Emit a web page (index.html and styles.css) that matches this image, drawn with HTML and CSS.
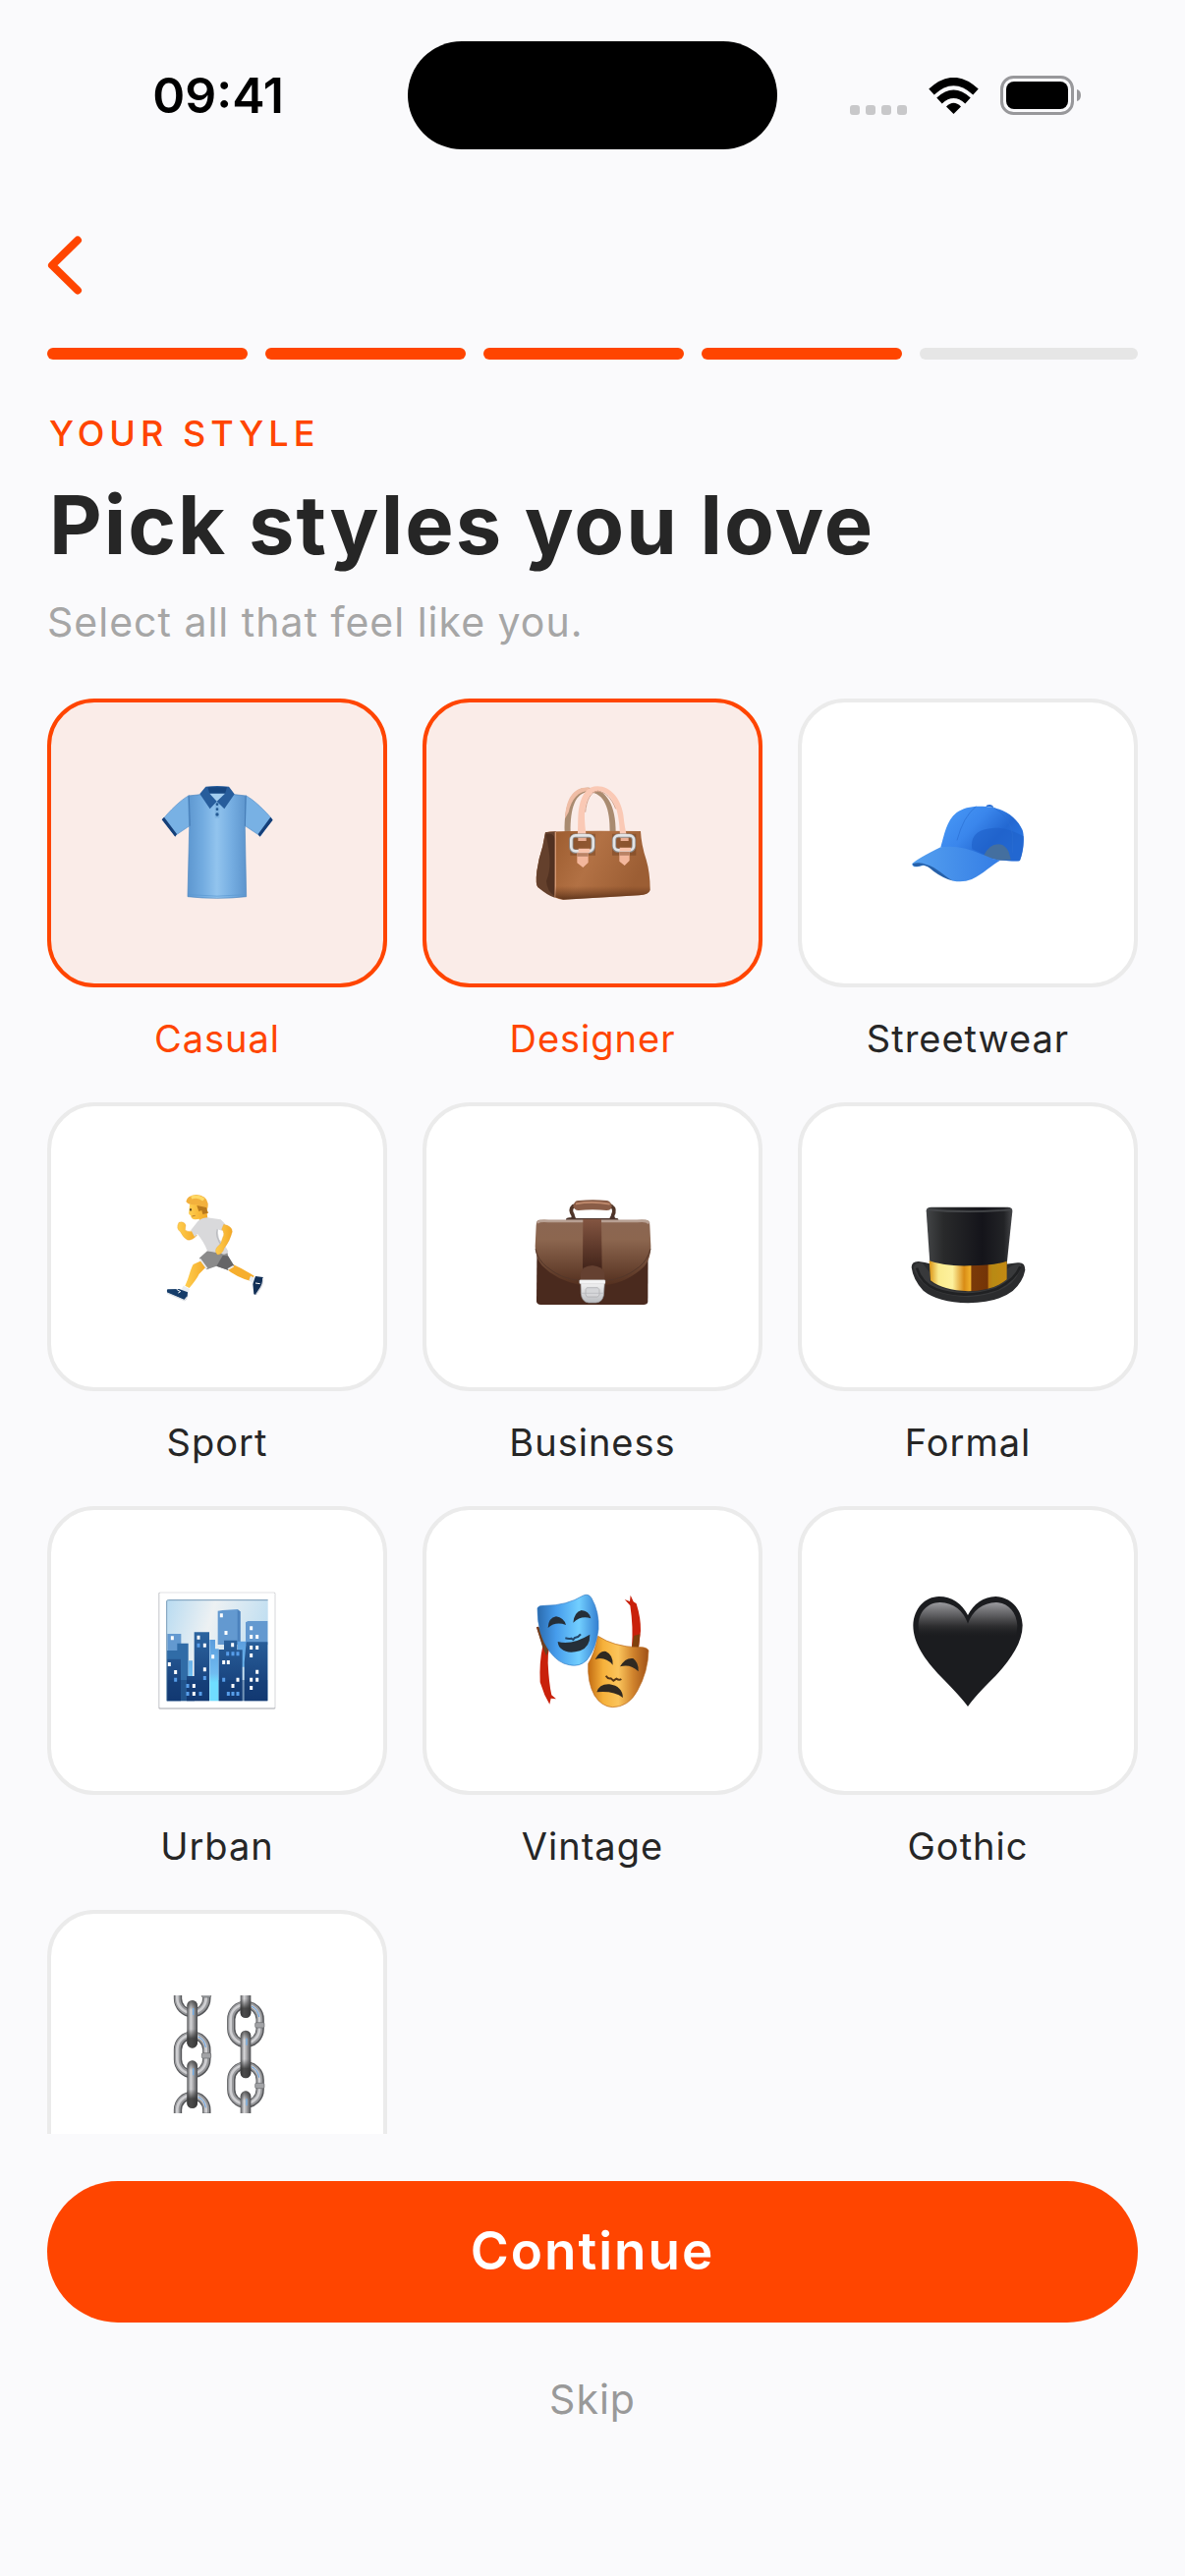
FILE: index.html
```html
<!DOCTYPE html>
<html lang="en">
<head>
<meta charset="utf-8">
<meta name="viewport" content="width=device-width, initial-scale=1">
<title>Pick styles you love</title>
<link rel="stylesheet" href="styles.css">
</head>
<body>
<div class="screen">
  <header class="status">
    <time class="clock">09:41</time>
    <div class="island"></div>
    <div class="indicators">
      <svg class="signal" viewBox="0 0 58 10" width="58" height="10" aria-hidden="true"><g fill="#c8c8ca"><rect width="10" height="10" rx="3"/><rect x="16" width="10" height="10" rx="3"/><rect x="32" width="10" height="10" rx="3"/><rect x="48" width="10" height="10" rx="3"/></g></svg>
      <svg viewBox="0 0 51 37" width="51" height="37" aria-hidden="true"><g fill="none" stroke="#000" stroke-width="8"><path d="M3 14.500Q25.500 -6.500 48 14.500"/><path d="M11 23.500Q25.500 10 40 23.500"/></g><path d="M25.500 37L18 29.500Q25.500 22 33 29.500Z"/></svg>
      <svg viewBox="0 0 82 40" width="82" height="40" aria-hidden="true"><rect x="1.500" y="1.500" width="72" height="37" rx="12" fill="none" stroke="#98989b" stroke-width="3"/><rect x="6" y="6" width="63" height="28" rx="8"/><path d="M78 14Q82 15 82 20T78 26Z" fill="#98989b"/></svg>
    </div>
  </header>

  <nav class="nav">
    <button class="back" type="button" aria-label="Back">
      <svg viewBox="0 0 36 60" width="36" height="60" aria-hidden="true"><path d="M31 4.500L5 30L31 55.500" fill="none" stroke="#ff4500" stroke-width="8" stroke-linecap="round" stroke-linejoin="round"/></svg>
    </button>
    <div class="progress" role="progressbar" aria-label="Step" aria-valuemin="0" aria-valuemax="5" aria-valuenow="4">
      <span class="step step-done"></span><span class="step step-done"></span><span class="step step-done"></span><span class="step step-done"></span><span class="step"></span>
    </div>
  </nav>

  <section class="intro">
    <p class="eyebrow">YOUR STYLE</p>
    <h1 class="title">Pick styles you love</h1>
    <p class="subtitle">Select all that feel like you.</p>
  </section>

  <main class="styles">
    <label class="tile">
      <input class="tile-box" type="checkbox" checked>
      <svg class="tile-icon" viewBox="63 84 360 360" aria-hidden="true">
        <defs>
          <linearGradient id="shirt" x1="0" x2="1"><stop stop-color="#5d97d0"/><stop offset=".25" stop-color="#72abe0"/><stop offset=".5" stop-color="#92c4ee"/><stop offset=".75" stop-color="#75ade1"/><stop offset="1" stop-color="#5d95cd"/></linearGradient>
        </defs>
        <path d="M157 119C132 132 96 168 77 192L114 242L160 211L190 150ZM330 119C355 132 392 168 411 192L375 243L327 211L300 150Z" fill="#78b1e4" stroke="#5b93cb" stroke-width="2"/>
        <path d="M81 185L120 237L115 245L74 193ZM406 185L368 237L373 245L413 194Z" fill="#153f78"/>
        <path d="M155 120Q185 117 203 115L285 115Q305 117 331 120L328 220L332 428Q243 438 153 428L158 220Z" fill="url(#shirt)" stroke="#4d86bf" stroke-width="2"/>
        <path d="M157 122L160 212M330 122L328 212" stroke="#477eb8" stroke-width="3"/>
        <path d="M220 113H267L243 139Z" fill="#a3cdef"/>
        <path d="M236 134H250V188H236Z" fill="#7fb4e2"/>
        <path d="M208 92Q243 88 279 92L296 115L265 160L242 137L221 160L190 114Z" fill="#275d9c"/>
        <path d="M214 94H273L267 113H220Z" fill="#164680"/>
        <path d="M220 113L242 137L267 113" fill="#a3cdef"/>
        <g fill="#235992"><circle cx="243" cy="146" r="4"/><circle cx="243" cy="161" r="4"/><circle cx="243" cy="177" r="5"/></g>
        <path d="M157 422Q243 431 329 422" fill="none" stroke="#5b98d2" stroke-width="2"/>
      </svg>
      <span class="tile-label">Casual</span>
    </label>
    <label class="tile">
      <input class="tile-box" type="checkbox" checked>
      <svg class="tile-icon" viewBox="69 84 360 360" aria-hidden="true">
        <defs>
          <linearGradient id="bag" x1="0" x2="1" y1="0" y2=".3"><stop stop-color="#955528"/><stop offset=".55" stop-color="#b27144"/><stop offset="1" stop-color="#9c5e34"/></linearGradient>
          <linearGradient id="bagShade" x1="0" x2="0" y1="0" y2="1"><stop offset=".8" stop-color="#5c3018" stop-opacity="0"/><stop offset="1" stop-color="#44220f" stop-opacity=".75"/></linearGradient>
        </defs>
        <path d="M164 232C162 145 184 92 238 95C292 98 321 150 320 232H302C303 160 286 112 238 108C196 110 181 158 182 232Z" fill="#a98b70"/>
        <path d="M165 190C168 130 190 92 238 95L242 104C205 104 184 132 176 170Z" fill="#efbda5"/>
        <path d="M105 232Q115 226 396 228Q398 270 413 315Q425 355 425 408Q421 422 391 424L160 437Q140 438 82 399Q74 390 79 350Q85 310 97 274Z" fill="url(#bag)"/>
        <path d="M105 232L137 229L134 431Q115 427 82 399Q75 390 79 350Q85 310 97 274Z" fill="#64402c"/>
        <path d="M106 238Q137 230 134 262L132 425Q110 410 108 380Q130 330 106 238Z" fill="#472a1b" opacity=".65"/>
        <path d="M136 230V430" stroke="#d49873" stroke-width="4"/>
        <path d="M136 229H396Q398 270 413 315Q425 355 425 408Q421 422 391 424L160 437L135 430Z" fill="url(#bagShade)"/>
        <path d="M181 236H258V302H181ZM309 236H382V302H309Z" fill="#6d3d1f" opacity=".45"/>
        <path d="M203 248C206 215 203 180 208 155C217 112 235 91 264 91C305 91 336 130 343 178C346 205 349 228 356 248H333C333 220 329 180 321 158C309 124 290 104 265 104C241 106 228 135 225 170C224 200 228 228 231 248Z" fill="#fac9b5"/>
        <path d="M227 170C230 135 243 107 265 106C289 107 308 128 320 160" fill="none" stroke="#d8a48d" stroke-width="3"/>
        <path d="M205 247H230V258H205ZM335 247H359V258H335Z" fill="#eaae93"/>
        <g fill="none"><rect x="184" y="242" width="67" height="48" rx="13" stroke="#8d8b8b" stroke-width="13"/><rect x="315" y="242" width="60" height="45" rx="13" stroke="#8d8b8b" stroke-width="13"/><rect x="184" y="241" width="67" height="48" rx="13" stroke="#e3e4e5" stroke-width="8"/><rect x="315" y="241" width="60" height="45" rx="13" stroke="#e3e4e5" stroke-width="8"/></g>
        <path d="M202 293H236V324L220 339L202 325ZM331 290H362V318L347 333L331 320Z" fill="#f3b79c"/>
        <path d="M202 295H236V305H202ZM331 291H362V302H331Z" fill="#b98365"/>
        <path d="M206 281H241V293H206ZM332 278H366V289H332Z" fill="#fac4ac"/>
      </svg>
      <span class="tile-label">Designer</span>
    </label>
    <label class="tile">
      <input class="tile-box" type="checkbox">
      <svg class="tile-icon" viewBox="75 54 360 360" aria-hidden="true">
        <defs>
          <linearGradient id="crown" x1="0" x2="1" y1="0" y2=".6"><stop stop-color="#4a9bf8"/><stop offset=".45" stop-color="#3a86ec"/><stop offset=".75" stop-color="#2368d2"/><stop offset="1" stop-color="#2a74df"/></linearGradient>
          <linearGradient id="brim" x1="0" x2="1"><stop stop-color="#55a0ef"/><stop offset="1" stop-color="#347de5"/></linearGradient>
        </defs>
        <path d="M310 122Q312 116 323 117Q333 119 333 126Z" fill="#2b70d4"/>
        <path d="M172 247C183 210 190 165 220 142C247 121 287 118 333 126C376 135 408 163 422 195C430 220 423 266 414 287Q410 293 350 286L260 275Z" fill="url(#crown)"/>
        <path d="M268 253Q260 200 315 191Q365 179 425 214Q427 255 414 288Q385 290 350 286Z" fill="#1f61ca" opacity=".65"/>
        <path d="M303 274Q318 239 348 238Q379 239 386 286L350 287Z" fill="#446f9f"/>
        <path d="M280 123Q241 153 222 226M335 126Q386 158 391 207V264" fill="none" stroke="#2b6ed1" stroke-width="2"/>
        <path d="M172 247Q230 238 302 270Q327 283 354 287C327 302 303 327 267 345Q240 356 211 350C180 338 150 306 119 302Q112 306 91 307Q84 305 85 297Q105 280 172 247Z" fill="url(#brim)"/>
        <path d="M86 298Q108 291 128 300C160 308 182 336 211 350Q181 343 150 320Q124 297 112 303Q90 311 86 298Z" fill="#2660a9"/>
      </svg>
      <span class="tile-label">Streetwear</span>
    </label>
    <label class="tile">
      <input class="tile-box" type="checkbox">
      <svg class="tile-icon" viewBox="33 57 360 360" aria-hidden="true">
        <defs><linearGradient id="skin" x1="0" x2="1"><stop stop-color="#ffce50"/><stop offset="1" stop-color="#f3a825"/></linearGradient></defs>
        <path d="M236 301Q272 331 316 342L326 326Q288 302 254 287Z" fill="#f6ae2d"/>
        <path d="M166 279L140 291C131 306 126 334 115 356L128 363Q151 335 158 320L183 295Z" fill="url(#skin)"/>
        <path d="M158 272L183 250H231Q246 249 246 265Q252 276 264 294L246 308L211 296L181 307Z" fill="#8b8b8b"/>
        <path d="M230 264L246 265L264 294L246 308L211 296Z" fill="#656567"/>
        <path d="M160 274L182 304M263 296L246 306" stroke="#eee" stroke-width="5"/>
        <path d="M110 356L129 366L124 381L103 369ZM315 326L331 334L325 350L310 340Z" fill="#e8edf2"/>
        <path d="M61 367L97 366L123 376Q123 398 113 401Q100 394 62 379Q57 373 61 367Z" fill="#153c69"/>
        <path d="M62 379L113 401L122 390" fill="none" stroke="#e1e3e6" stroke-width="4"/>
        <path d="M330 327L353 330Q355 352 340 371Q333 387 325 382L322 351Z" fill="#112f56"/>
        <path d="M353 333Q355 352 340 371L332 383" fill="none" stroke="#d9dce2" stroke-width="4"/>
        <path d="M89 367L101 374L94 378M330 348L344 350" fill="none" stroke="#fff" stroke-width="3"/>
        <path d="M96 163Q111 158 117 171L115 186Q126 194 137 188L151 202Q138 219 122 216Q111 211 101 192Q86 181 96 163Z" fill="url(#skin)" stroke="#e79e29" stroke-width="1"/>
        <path d="M129 107L127 129Q124 138 132 141Q134 154 146 154L158 152L160 161L184 151L180 119L160 98Z" fill="url(#skin)"/>
        <path d="M133 186L155 158Q176 145 192 149L224 154L238 168L228 188L214 184L219 214Q239 233 247 252Q239 264 226 258L183 250Q175 226 153 198L144 207Z" fill="#d9d9db"/>
        <path d="M214 184Q205 205 230 239" stroke="#bbbdc1" stroke-width="4" fill="none"/>
        <path d="M233 169Q259 174 259 191Q252 219 235 241Q227 263 214 261Q203 250 214 237L224 227L230 209Q238 194 227 184Z" fill="url(#skin)" stroke="#e9a12d" stroke-width="1"/>
        <path d="M118 99Q120 81 149 78Q180 79 185 105Q186 121 180 127L187 132Q180 141 169 136L160 118L150 108Q127 111 118 99Z" fill="#f3b13d"/>
        <path d="M134 87Q155 79 172 94" stroke="#ffd966" stroke-width="10" fill="none"/>
        <path d="M151 111L157 129L166 126L169 138L185 134L180 117Z" fill="#b9791d"/>
        <ellipse cx="132" cy="124" rx="3" ry="4" fill="#5e4327"/><path d="M136 144L146 142" stroke="#9b5a22" stroke-width="2"/>
      </svg>
      <span class="tile-label">Sport</span>
    </label>
    <label class="tile">
      <input class="tile-box" type="checkbox">
      <svg class="tile-icon" viewBox="69 27 360 360" aria-hidden="true">
        <defs>
          <linearGradient id="leather" x1="0" x2="0" y1="0" y2="1"><stop stop-color="#8b6652"/><stop offset=".3" stop-color="#8c664f"/><stop offset="1" stop-color="#54301f"/></linearGradient>
          <linearGradient id="strap" x1="0" x2="0" y1="0" y2="1"><stop stop-color="#835541"/><stop offset="1" stop-color="#412319"/></linearGradient>
          <linearGradient id="lock" x1="0" x2="0" y1="0" y2="1"><stop stop-color="#f4f4f5"/><stop offset="1" stop-color="#babcc0"/></linearGradient>
        </defs>
        <path d="M190 112Q178 94 190 83Q249 72 307 83Q321 93 310 113" fill="none" stroke="#513629" stroke-width="11"/>
        <path d="M190 83Q193 66 206 66Q250 62 294 66Q306 69 308 83Q307 96 292 96Q250 91 206 96Q193 95 190 83Z" fill="#8a5d47"/>
        <path d="M198 76Q250 67 302 77" stroke="#c08a6d" stroke-width="5" fill="none"/>
        <path d="M168 122Q170 116 184 118L187 108H193L198 120H301L307 109H314L318 119Q330 119 328 125H168Z" fill="#4b332a"/>
        <path d="M80 136H419L418 376Q416 384 405 384H91Q79 382 78 374Z" fill="#4a2a1e"/>
        <path d="M86 125H413Q424 126 424 142L427 204Q428 240 408 266Q355 317 288 324H211Q137 309 95 265Q75 241 74 205L77 142Q78 126 86 125Z" fill="url(#leather)"/>
        <path d="M75 214Q82 247 110 269Q154 306 211 310M426 214Q418 247 391 269Q346 306 288 311" fill="none" stroke="#54372a" stroke-width="3"/>
        <path d="M80 133Q90 126 115 129H385Q416 125 421 136" stroke="#b8a093" stroke-width="8" fill="none"/>
        <path d="M220 123H276L278 278H219Z" fill="url(#strap)"/>
        <path d="M213 312V286Q217 266 249 264Q281 268 286 287V312Z" fill="#654131"/>
        <path d="M213 316L286 316L283 356Q278 377 259 378H237Q216 375 214 350Z" fill="url(#lock)" stroke="#98999c" stroke-width="2"/>
        <rect x="209" y="308" width="79" height="12" rx="3" fill="#f3f3f4" stroke="#b9babd"/>
        <path d="M232 332H265L270 338V354L265 360H232L228 353V338Z" fill="#d5d6d9" stroke="#a6a8ab" stroke-width="2"/><path d="M216 349H283" stroke="#b2b4b8" stroke-width="2"/>
      </svg>
      <span class="tile-label">Business</span>
    </label>
    <label class="tile">
      <input class="tile-box" type="checkbox">
      <svg class="tile-icon" viewBox="75 27 360 360" aria-hidden="true">
        <defs>
          <linearGradient id="felt" x1="0" x2="1"><stop stop-color="#434547"/><stop offset=".2" stop-color="#292a2b"/><stop offset=".65" stop-color="#14141a"/><stop offset=".9" stop-color="#222326"/><stop offset="1" stop-color="#454649"/></linearGradient>
          <linearGradient id="gold" x1="0" x2="1"><stop stop-color="#d99111"/><stop offset=".12" stop-color="#faeb8e"/><stop offset=".3" stop-color="#fdf19d"/><stop offset=".45" stop-color="#d98c16"/><stop offset=".53" stop-color="#efb02b"/><stop offset=".55" stop-color="#7a3909"/><stop offset=".75" stop-color="#743407"/><stop offset=".77" stop-color="#bc7d12"/><stop offset=".82" stop-color="#b88a14"/><stop offset="1" stop-color="#c48912"/></linearGradient>
        </defs>
        <path d="M83 270Q83 251 105 252Q123 254 145 260H370L407 256Q430 253 430 278Q423 314 392 342Q348 377 256 379Q162 376 119 341Q88 309 83 270Z" fill="#2b2c2e"/>
        <path d="M89 270Q96 253 117 258L139 286V313Q181 344 256 345Q332 343 374 307V276Q398 257 418 260Q417 289 388 318Q346 354 256 361Q161 356 122 321Q95 297 89 270Z" fill="#38393b"/>
        <path d="M99 272Q114 320 158 337Q245 369 343 336Q398 310 415 268" fill="none" stroke="#202123" stroke-width="8"/>
        <path d="M128 97Q128 87 143 86H377Q392 87 391 99L374 260Q354 279 256 280Q162 277 139 257Z" fill="url(#felt)"/>
        <path d="M130 94Q255 105 389 94" stroke="#45474a" stroke-width="5" fill="none"/>
        <path d="M137 250Q182 267 259 265Q337 264 374 251V307Q334 341 256 343Q179 340 141 310Z" fill="url(#gold)"/>
      </svg>
      <span class="tile-label">Formal</span>
    </label>
    <label class="tile">
      <input class="tile-box" type="checkbox">
      <svg class="tile-icon" viewBox="63 60 360 360" aria-hidden="true">
        <defs>
          <linearGradient id="sky" x1="0" x2="1" y2=".3"><stop stop-color="#b8dbf1"/><stop offset=".45" stop-color="#edf1f3"/><stop offset="1" stop-color="#bfdef1"/></linearGradient>
          <linearGradient id="tower" x1="0" x2="0" y1="0" y2="1"><stop stop-color="#2c649f"/><stop offset="1" stop-color="#123873"/></linearGradient>
          <linearGradient id="river" x1="0" x2="0" y1="0" y2="1"><stop stop-color="#5b9ddd"/><stop offset=".55" stop-color="#70bcf1"/><stop offset=".7" stop-color="#6fddff"/></linearGradient>
        </defs>
        <rect x="64" y="62" width="357" height="357" rx="4" fill="#c2c3c8"/><rect x="67" y="64" width="352" height="351" rx="3" fill="#fff"/>
        <rect x="89" y="85" width="309" height="309" rx="4" fill="url(#sky)"/>
        <path d="M91 189H133V252H91ZM245 119L260 117L306 114L313 121V222H245ZM330 154L337 150H397V222H330Z" fill="#6399d0"/>
        <path d="M305 116L314 121V213H305Z" fill="#4c82bd"/>
        <path d="M121 218H155V318H174V394H90V240H121Z" fill="#306ca7"/>
        <path d="M155 271H168V318H155ZM220 207H237V235H248V394H220ZM305 212H332V290H305Z" fill="url(#river)"/>
        <path d="M173 184H219V394H150V318H173ZM248 237H264V209H304V238H320V394H248ZM90 266H132V394H90ZM332 214H397V394H326V276Z" fill="url(#tower)"/>
        <path d="M90 330H219V394H90ZM248 330H397V394H248Z" fill="#123970" opacity=".45"/>
        <path d="M89 394V89Q90 86 95 86H398" stroke="#779bb7" stroke-width="3" fill="none"/>
        <path d="M256 127v12M270 180v12M106 196v12M186 194v12M205 218v12M97 276v12M116 300v12M205 292v12M172 342v12M172 366v12M230 253v12M290 217v12M263 270v12M277 270v12M306 323v12M291 342v12M347 166v12M347 192v12M365 192v12M347 225v12M365 225v12M347 249v12M365 299v12M347 323v12M365 323v12M347 348v12" stroke="#fff" stroke-width="9"/>
        <path d="M186 218v12M116 323v12M205 318v12M153 342v12M153 366v12M192 366v12M275 244v12M291 244v12M306 244v12M263 323v12M277 366v12M291 366v12M306 366v12" stroke="#579de9" stroke-width="9"/>
      </svg>
      <span class="tile-label">Urban</span>
    </label>
    <label class="tile">
      <input class="tile-box" type="checkbox">
      <svg class="tile-icon" viewBox="69 60 360 360" aria-hidden="true">
        <defs>
          <linearGradient id="joy" x1="0" x2="1"><stop stop-color="#2b6bae"/><stop offset=".3" stop-color="#459beb"/><stop offset=".68" stop-color="#72cfff"/><stop offset="1" stop-color="#347fd1"/></linearGradient>
          <linearGradient id="sorrow" x1="0" x2="1"><stop stop-color="#c36c12"/><stop offset=".25" stop-color="#f6b13b"/><stop offset=".5" stop-color="#fbc45b"/><stop offset=".75" stop-color="#cf822c"/><stop offset="1" stop-color="#9f5117"/></linearGradient>
        </defs>
        <path d="M78 169Q84 163 91 177L117 232Q112 252 113 278Q116 340 124 376L138 388L122 386L118 404L103 376L89 337Q86 277 97 226Z" fill="#c9210b"/>
        <path d="M78 169Q84 163 91 177L117 232L108 256L96 228Z" fill="#70401f"/>
        <path d="M365 71L374 91L383 97Q397 142 396 180L390 231H369Q374 167 364 103L347 84L363 90Z" fill="#c9210b"/><path d="M375 195L394 190L390 231H369Z" fill="#80400c"/>
        <path d="M81 110Q86 102 103 103Q170 103 221 72Q237 65 246 80Q270 122 267 175Q260 235 232 269Q210 291 178 284Q145 279 119 244Q80 190 81 110Z" fill="url(#joy)" stroke="#317ac4" stroke-width="2"/>
        <path d="M113 171Q114 140 138 136Q161 139 168 162Q136 150 113 171ZM190 155Q193 123 215 117Q238 118 244 142Q215 131 190 155Z" fill="#252e38"/>
        <path d="M143 213Q187 224 241 191Q242 229 211 241Q173 252 154 235Q144 228 143 213Z" fill="#252f38"/>
        <path d="M166 202Q177 205 184 203L190 207L195 201Q207 199 213 190" fill="none" stroke="#24486b" stroke-width="6"/>
        <path d="M266 196Q314 228 386 230Q412 228 420 239Q419 304 386 363Q359 413 310 413Q276 411 255 377Q233 337 236 280Q254 252 266 196Z" fill="url(#sorrow)" stroke="#ba691f" stroke-width="2"/>
        <path d="M257 267Q272 239 290 243Q312 253 311 284Q287 257 257 267ZM333 289Q349 261 373 264Q391 277 389 304Q364 279 333 289ZM262 367Q270 341 301 343Q340 349 342 384Q313 362 262 367Z" fill="#302921"/>
        <path d="M290 317Q297 328 305 325L313 332L322 326Q330 332 337 327" fill="none" stroke="#573716" stroke-width="6"/>
      </svg>
      <span class="tile-label">Vintage</span>
    </label>
    <label class="tile">
      <input class="tile-box" type="checkbox">
      <svg class="tile-icon" viewBox="75 60 360 360" aria-hidden="true">
        <defs><linearGradient id="gloss" x1="0" x2="0" y1="0" y2="1"><stop stop-color="#9b9b9f"/><stop offset=".15" stop-color="#707073"/><stop offset=".4" stop-color="#303032"/><stop offset=".6" stop-color="#1d1e20" stop-opacity="0"/></linearGradient></defs>
        <path d="M255 411Q236 384 171 318C125 270 88 219 88 163C90 111 124 76 167 75Q225 76 255 132Q284 77 340 75C389 77 421 117 422 163C422 219 381 273 339 318Q276 380 255 411Z" fill="#1b1c1f"/>
        <path d="M255 158Q233 96 170 93C131 94 105 122 104 164Q105 225 146 270H365Q404 225 406 164C404 121 377 94 342 93Q278 96 255 158Z" fill="url(#gloss)"/>
      </svg>
      <span class="tile-label">Gothic</span>
    </label>
    <label class="tile">
      <input class="tile-box" type="checkbox" aria-label="Chains">
      <svg class="tile-icon" viewBox="393 333 360 360" aria-hidden="true">
        <defs>
          <linearGradient id="steel" x1="0" x2="1"><stop stop-color="#555659"/><stop offset=".35" stop-color="#d6d6d8"/><stop offset=".6" stop-color="#a7a7aa"/><stop offset="1" stop-color="#48494c"/></linearGradient>
          <linearGradient id="steelShade" x1="0" x2="0" y1="0" y2="1"><stop stop-color="#333" stop-opacity=".75"/><stop offset=".2" stop-color="#333" stop-opacity="0"/><stop offset=".6" stop-color="#333" stop-opacity="0"/><stop offset=".8" stop-color="#333" stop-opacity=".85"/></linearGradient>
          <g id="ring" fill="none"><rect x="-44" y="-59" width="88" height="118" rx="44" stroke="#56575a" stroke-width="25"/><rect x="-45" y="-60" width="88" height="118" rx="44" stroke="#97989b" stroke-width="18"/><rect x="-46" y="-60" width="88" height="118" rx="44" stroke="#cfcfd2" stroke-width="8"/><rect x="29" y="-5" width="28" height="16" rx="4" fill="#a2a3a6" stroke="#68696c" stroke-width="2"/><path d="M18-55Q38-46 41-22" stroke="#5d9ee2" stroke-width="3"/></g>
          <g id="bar"><rect x="-16" y="-73" width="32" height="146" rx="16" fill="url(#steel)"/><rect x="-16" y="-73" width="32" height="146" rx="16" fill="url(#steelShade)"/><path d="M3-49V-28" stroke="#72aee8" stroke-width="4"/></g>
        </defs>
        <use href="#ring" x="497" y="328"/><use href="#ring" x="497" y="514"/><use href="#ring" x="497" y="698"/>
        <use href="#bar" x="497" y="421"/><use href="#bar" x="497" y="605"/>
        <use href="#ring" x="660" y="421"/><use href="#ring" x="660" y="606"/>
        <use href="#bar" x="660" y="329"/><use href="#bar" x="660" y="513"/><use href="#bar" x="660" y="698"/>
      </svg>
    </label>
  </main>

  <footer class="actions">
    <button class="continue" type="button">Continue</button>
    <button class="skip" type="button">Skip</button>
  </footer>
</div>
</body>
</html>
```
FILE: styles.css
```css
:root {
  --accent: #ff4500;
  --ink: #262626;
  --line: #ebebeb;
  --page: #fafafc;
}

* {
  box-sizing: border-box;
}

body {
  margin: 0;
  background: var(--page);
  color: var(--ink);
  font-family: Inter, "Liberation Sans", sans-serif;
}

button {
  border: 0;
  padding: 0;
  background: none;
  font: inherit;
  cursor: pointer;
}

svg {
  display: block;
}

.screen {
  display: flex;
  flex-direction: column;
  height: 100vh;
}

/* Status bar */
.status {
  display: grid;
  grid-template-columns: 1fr auto 1fr;
  align-items: center;
  padding: 42px 0 88px;
}

.clock {
  justify-self: end;
  padding-right: 126px;
  color: #000;
  font-size: 50px;
  font-weight: 600;
  line-height: 60px;
}

.island {
  width: 376px;
  height: 110px;
  border-radius: 55px;
  background: #000;
}

.indicators {
  display: flex;
  align-items: center;
  gap: 22px;
  padding-left: 74px;
}

.signal {
  align-self: flex-end;
}

/* Back button and step bar */
.nav {
  display: flex;
  flex-direction: column;
  align-items: flex-start;
  gap: 54px;
  padding: 0 48px;
}

.progress {
  display: grid;
  grid-template-columns: repeat(5, 1fr);
  width: 100%;
}

.step {
  height: 12px;
  margin-right: 18px;
  border-radius: 6px;
  background: #e6e6e6;
}

.step:last-child {
  margin-right: 0;
}

.step-done {
  background: var(--accent);
}

/* Heading */
.intro {
  padding: 51px 48px;
}

.eyebrow,
.title,
.subtitle {
  margin: 0;
}

.eyebrow,
.title {
  padding-left: 2px;
}

.eyebrow {
  color: var(--accent);
  font-size: 36px;
  font-weight: 500;
  line-height: 48px;
  letter-spacing: 5px;
}

.title {
  margin: 15px 0 18px;
  font-size: 83px;
  font-weight: 700;
  line-height: 108px;
  letter-spacing: 2px;
}

.subtitle {
  color: #a6a6a6;
  font-size: 41px;
  font-weight: 400;
  line-height: 54px;
  letter-spacing: 1px;
}

/* Style picker */
.styles {
  display: grid;
  flex: 1;
  grid-template-columns: repeat(3, 1fr);
  align-content: start;
  gap: 41px 36px;
  min-height: 0;
  padding: 0 48px;
  overflow-y: auto;
  scrollbar-width: none;
}

.tile {
  display: grid;
  grid-template-rows: 294px auto;
  row-gap: 28px;
  cursor: pointer;
}

.tile-box {
  grid-area: 1 / 1;
  width: 100%;
  height: 100%;
  margin: 0;
  border: 4px solid var(--line);
  border-radius: 48px;
  background: #fff;
  appearance: none;
}

.tile-box:checked {
  border-color: var(--accent);
  background: #faece8;
}

.tile-icon {
  grid-area: 1 / 1;
  place-self: center;
  width: 120px;
  height: 120px;
}

.tile-label {
  font-size: 38px;
  line-height: 48px;
  letter-spacing: 1px;
  text-align: center;
}

.tile-box:checked ~ .tile-label {
  color: var(--accent);
}

/* Footer actions */
.actions {
  display: flex;
  flex-direction: column;
  gap: 51px;
  padding: 48px 48px 153px;
}

.continue {
  height: 144px;
  padding-bottom: 2px;
  border-radius: 72px;
  background: var(--accent);
  color: #fff;
  font-size: 53px;
  font-weight: 600;
  letter-spacing: 2px;
}

.skip {
  align-self: center;
  color: #999;
  font-size: 41px;
  line-height: 54px;
  letter-spacing: 1px;
}
```
